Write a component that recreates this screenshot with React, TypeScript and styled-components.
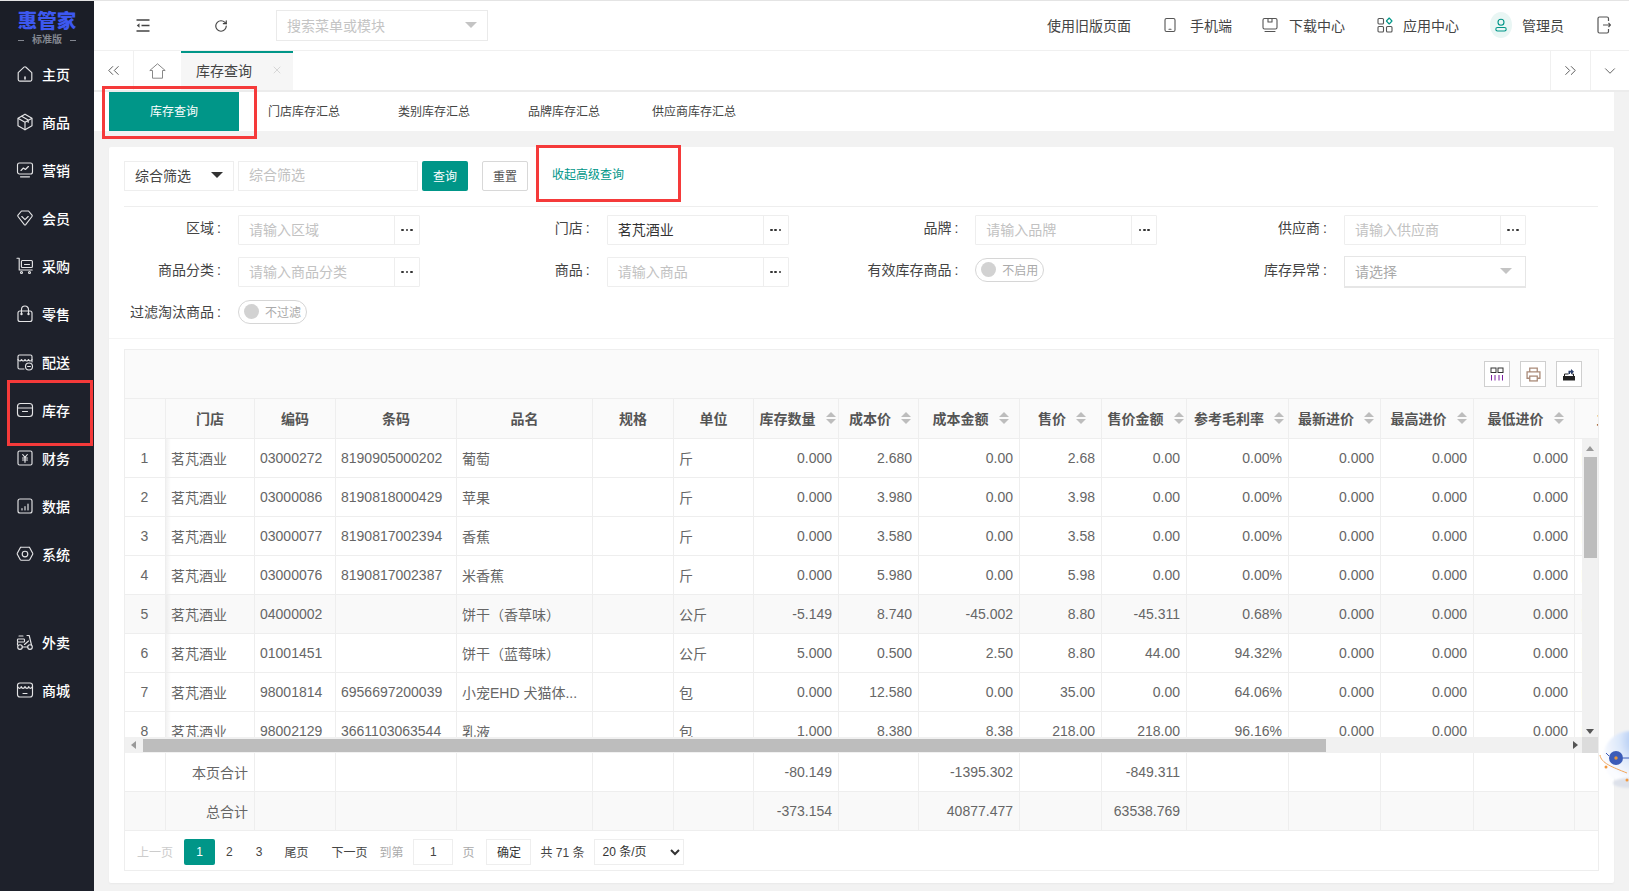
import React from 'react';
import styled, { createGlobalStyle } from 'styled-components';
import { RotateCw, ChevronsLeft, ChevronsRight, ChevronDown, X } from 'lucide-react';

const GREEN = '#009688';
const LINE = '#eeeeee';

const Global = createGlobalStyle`
  html, body { margin: 0; padding: 0; height: 100%; background: #f2f2f2; overflow: hidden; }
  * { box-sizing: border-box; }
  body, select, input, button { font-family: "Liberation Sans", "Noto Sans CJK SC", sans-serif; }
`;

const Page = styled.div`
  display: flex; width: 1629px; height: 891px; position: relative; overflow: hidden;
  border-top: 1px solid #e4e4e4; color: #333;
`;
const Sidebar = styled.aside`
  width: 94px; flex: none; background: #1e212b; display: flex; flex-direction: column;
`;
const LogoBox = styled.div`
  height: 49px; background: #1b1e27; display: flex; flex-direction: column; align-items: center; padding-top: 9px;
`;
const LogoName = styled.div`
  font-size: 19.5px; line-height: 22px; font-weight: 900; color: #3d58f0;
`;
const LogoSub = styled.div`
  font-size: 10px; line-height: 14px; margin-top: 1px; font-weight: 700; color: #82868f;
  display: flex; align-items: center; gap: 8px;
  &::before, &::after { content: ''; width: 6px; height: 1px; background: #82868f; }
`;
const NavList = styled.nav`
  display: flex; flex-direction: column;
`;
const NavItem = styled.a<{ $gap?: boolean }>`
  height: 48px; display: flex; align-items: center; gap: 8px; padding-left: 16px;
  margin-top: ${p => (p.$gap ? '40px' : '0')};
  color: #fff; font-size: 14px; font-weight: 500;
`;
const NavGlyph = styled.svg.attrs({ viewBox: '0 0 18 18' })`
  width: 18px; height: 18px; flex: none; fill: none; stroke: #e4e4e6; stroke-width: 1.15;
  stroke-linecap: round; stroke-linejoin: round;
`;

const Main = styled.main`
  flex: 1; min-width: 0; display: flex; flex-direction: column;
`;
const TopBar = styled.header`
  height: 50px; background: #fff; border-bottom: 1px solid #f0f0f0; display: flex; align-items: center; flex: none; padding-left: 10px;
`;
const TopTool = styled.span`
  display: flex; align-items: center; justify-content: center; width: 78px; flex: none; color: #333;
`;
const MenuSearch = styled.div`
  width: 212px; height: 31px; border: 1px solid #eaeaea; display: flex; align-items: center;
  justify-content: space-between; padding: 0 10px 2px; font-size: 14px; color: #c4c4c4; margin-left: 16px;
`;
const Caret = styled.i<{ $color?: string; $w?: number }>`
  display: block; flex: none; width: 0; height: 0;
  border-left: ${p => p.$w ?? 6}px solid transparent; border-right: ${p => p.$w ?? 6}px solid transparent;
  border-top: ${p => p.$w ?? 6}px solid ${p => p.$color ?? '#c4c4c4'};
`;
const TopLinks = styled.div`
  margin-left: auto; display: flex; align-items: center; padding: 0 18px 2px 0; font-size: 14px; color: #444;
`;
const TopLink = styled.a<{ $ml: number; $gap: number }>`
  display: flex; align-items: center; gap: ${p => p.$gap}px; margin-left: ${p => p.$ml}px;
`;
const TopGlyph = styled.svg.attrs({ viewBox: '0 0 16 16' })`
  width: 16px; height: 16px; flex: none; fill: none; stroke: #555; stroke-width: 1.1; stroke-linejoin: round; stroke-linecap: round;
`;
const LogoutGlyph = styled.svg.attrs({ viewBox: '0 0 14 18' })`
  width: 14px; height: 18px; margin-left: 33px; fill: none; stroke: #555; stroke-width: 1.2;
`;
const Avatar = styled.span`
  width: 22px; height: 26px; border-radius: 50%; background: #e9f6f4; display: flex; align-items: center; justify-content: center;
`;

const TabsBar = styled.div`
  height: 41px; background: #fff; border-bottom: 2px solid #ececec; display: flex; flex: none;
`;
const TabEdge = styled.span<{ $w: number; $side: 'l' | 'r' }>`
  width: ${p => p.$w}px; flex: none; display: flex; align-items: center; justify-content: center; color: #555;
  border-${p => (p.$side === 'l' ? 'right' : 'left')}: 1px solid #f0f0f0;
`;
const HomeTab = styled.span`
  width: 47px; flex: none; display: flex; align-items: center; justify-content: center;
`;
const OpenTab = styled.div`
  width: 112px; flex: none; background: #f6f6f6; border-top: 2px solid ${GREEN}; display: flex; align-items: center;
  padding: 0 0 3px 15px; font-size: 14px; color: #444; gap: 19px;
`;
const TabSpacer = styled.div`flex: 1;`;

const SubTabs = styled.div`
  height: 39px; margin-right: 15px; background: #fff; display: flex; padding-left: 15px; flex: none;
`;
const SubTab = styled.a<{ $on?: boolean }>`
  width: 130px; display: flex; align-items: center; justify-content: center; font-size: 12px; padding-bottom: 3px;
  background: ${p => (p.$on ? GREEN : 'transparent')}; color: ${p => (p.$on ? '#fff' : '#444')};
`;

const Content = styled.div`
  flex: 1; min-height: 0; padding: 16px 15px 9px 15px;
`;
const Card = styled.section`
  height: 736px; background: #fff; border-radius: 2px; box-shadow: 0 1px 2px rgba(0,0,0,.04); display: flex; flex-direction: column;
`;
const QueryArea = styled.div`
  height: 192px; padding: 14px 16px 0 15px; border-bottom: 1px solid #f4f4f4; flex: none;
`;
const QueryRow = styled.div`
  height: 46px; display: flex; border-bottom: 1px solid ${LINE}; align-items: flex-start;
`;
const TypeSelect = styled.div`
  width: 110px; height: 30px; border: 1px solid #eee; display: flex; align-items: center; justify-content: space-between;
  padding: 0 10px 2px; font-size: 14px; color: #444;
`;
const KeywordInput = styled.div`
  width: 180px; height: 30px; border: 1px solid #eee; margin-left: 4px; padding: 0 10px; line-height: 26px; font-size: 14px; color: #c2c2c2;
`;
const QueryBtn = styled.button`
  width: 46px; height: 30px; border: 0; border-radius: 2px; background: ${GREEN}; color: #fff; font-size: 12px; margin-left: 4px; padding: 0 0 2px;
`;
const ResetBtn = styled.button`
  width: 46px; height: 30px; border: 1px solid #d8d8d8; border-radius: 2px; background: #fff; color: #555; font-size: 12px; margin-left: 14px; padding: 0 0 2px;
`;
const FoldLink = styled.a`
  font-size: 12px; color: ${GREEN}; line-height: 28px; margin-left: 24px;
`;
const FormGrid = styled.div`
  display: grid; grid-template-columns: repeat(4, 368.67px); grid-auto-rows: 30px; row-gap: 12px; margin-top: 8px;
`;
const Field = styled.div`
  display: flex; align-items: flex-start;
`;
const FieldLabel = styled.label`
  width: 97px; flex: none; margin-right: 17px; font-size: 14px; line-height: 27px; color: #444; white-space: nowrap;
  display: flex; justify-content: flex-end; gap: 3px;
`;
const PickInput = styled.div`
  width: 182px; height: 30px; border: 1px solid #eee; border-radius: 1px; display: flex; font-size: 14px;
`;
const PickText = styled.span<{ $filled?: boolean }>`
  flex: 1; padding-left: 10px; line-height: 29px; color: ${p => (p.$filled ? '#333' : '#c2c2c2')};
`;
const PickMore = styled.span`
  width: 25px; flex: none; border-left: 1px solid #eee; display: flex; align-items: center; justify-content: center; gap: 1.6px;
  & > i { width: 2.8px; height: 2.8px; border-radius: 50%; background: #333; display: block; }
`;
const PlainSelect = styled.div`
  width: 182px; height: 32px; margin-top: -1px; border: 1px solid #e6e6e6; border-bottom-width: 2px; display: flex; align-items: center; justify-content: space-between;
  padding: 0 13px 2px 10px; font-size: 14px; color: #aaa;
`;
const Toggle = styled.span`
  width: 69px; height: 24px; border: 1px solid #d6d6d6; border-radius: 12px; display: flex; align-items: center; gap: 6px;
  padding: 0 0 1px 5px; font-size: 12px; color: #aaa; margin-top: 1px;
  &::before { content: ''; width: 15px; height: 15px; border-radius: 50%; background: #d2d2d2; }
`;

const TableArea = styled.div`
  flex: 1; padding: 10px 15px 11px 15px; min-height: 0;
`;
const TableFrame = styled.div`
  height: 522px; border: 1px solid ${LINE}; display: flex; flex-direction: column; overflow: hidden;
`;
const ToolStrip = styled.div`
  height: 49px; background: #fafafa; border-bottom: 1px solid ${LINE}; display: flex; align-items: center; justify-content: flex-end; gap: 10px; padding-right: 16px; flex: none;
`;
const ToolBtn = styled.span`
  width: 26px; height: 26px; border: 1px solid #cfcfcf; display: flex; align-items: center; justify-content: center; background: #fff;
`;
const ClipBox = styled.div`
  overflow: hidden; flex: none;
`;
const DataTable = styled.table`
  border-collapse: separate; border-spacing: 0; table-layout: fixed; width: 1550px; font-size: 14px; color: #666;
`;
const HeadCell = styled.th`
  height: 40px; padding: 0 0 2px; font-weight: 700; color: #555; background: #fafafa; text-align: center;
  border-right: 1px solid ${LINE}; border-bottom: 1px solid ${LINE}; white-space: nowrap; overflow: hidden;
`;
const HeadInner = styled.span`
  display: inline-flex; align-items: center;
`;
const SortMark = styled.span`
  display: flex; flex-direction: column; gap: 2px; margin: 0 -3px 0 10px;
  &::before, &::after { content: ''; display: block; width: 0; height: 0; border-left: 5px solid transparent; border-right: 5px solid transparent; }
  &::before { border-bottom: 5px solid #bdbdbd; }
  &::after { border-top: 5px solid #bdbdbd; }
`;
const Cell = styled.td<{ $align?: string; $bg?: string; $fixed?: boolean }>`
  height: 39px; padding: 0 6px 0 5px; text-align: ${p => p.$align ?? 'left'}; white-space: nowrap; overflow: hidden;
  background-color: ${p => p.$bg ?? '#fff'};
  border-right: 1px solid ${LINE}; border-bottom: 1px solid ${LINE};
  ${p => p.$fixed ? 'background-image: linear-gradient(90deg, rgba(0,0,0,.05), rgba(0,0,0,0) 5px);' : ''}
`;
const ScrollGrid = styled.div`
  display: grid; grid-template-columns: 1fr 16px; grid-template-rows: 298px 16px; flex: none;
`;
const BodyClip = styled.div`
  overflow: hidden; min-width: 0;
`;
const VBar = styled.div`
  background: #f1f1f1; display: flex; flex-direction: column; align-items: center; justify-content: space-between;
`;
const VThumb = styled.div`
  width: 13px; height: 101px; background: #bdbdbd; margin-top: 6px;
`;
const VEnd = styled.div`
  height: 11px; display: flex; align-items: center; justify-content: center;
`;
const VBarTop = styled.div`
  display: flex; flex-direction: column; align-items: center; padding-top: 7px;
`;
const HBar = styled.div`
  background: #f1f1f1; display: flex; align-items: center; padding: 0 4px 0 6px;
`;
const HThumb = styled.div`
  width: 1183px; height: 13px; background: #bdbdbd; margin-left: 7px;
`;
const Tri = styled.i<{ $dir: 'up' | 'down' | 'left' | 'right'; $c?: string }>`
  display: block; width: 0; height: 0; border: 4px solid transparent;
  ${p => p.$dir === 'up' && `border-bottom: 5px solid ${p.$c ?? '#999'}; border-top-width: 0;`}
  ${p => p.$dir === 'down' && `border-top: 5px solid ${p.$c ?? '#555'}; border-bottom-width: 0;`}
  ${p => p.$dir === 'left' && `border-right: 5px solid ${p.$c ?? '#999'}; border-left-width: 0;`}
  ${p => p.$dir === 'right' && `border-left: 5px solid ${p.$c ?? '#555'}; border-right-width: 0;`}
`;
const Corner = styled.div`background: #dcdcdc;`;
const Pager = styled.div`
  flex: 1; display: flex; align-items: center; font-size: 12px; color: #444; padding: 2px 0 0 12px;
`;
const PagerText = styled.span<{ $ml?: number; $muted?: boolean; $soft?: boolean }>`
  margin-left: ${p => p.$ml ?? 0}px; color: ${p => (p.$muted ? '#ccc' : p.$soft ? '#aaa' : '#444')}; white-space: nowrap;
`;
const PageOn = styled.span`
  width: 31px; height: 26px; border-radius: 2px; background: ${GREEN}; color: #fff; display: flex; align-items: center; justify-content: center; margin-left: 11px;
`;
const PageBox = styled.span`
  width: 40px; height: 26px; border: 1px solid #eee; display: flex; align-items: center; justify-content: center; margin-left: 10px;
`;
const ConfirmBtn = styled.button`
  width: 45px; height: 26px; border: 1px solid #eee; background: #fff; color: #333; font-size: 12px; margin-left: 12px; padding: 0;
`;
const SizeSelect = styled.select`
  width: 90px; height: 26px; border: 1px solid #eee; background: #fff; color: #333; font-size: 12px; margin-left: 10px; padding-left: 3px; outline: none;
`;

const Annot = styled.div<{ $x: number; $y: number; $w: number; $h: number }>`
  position: absolute; left: ${p => p.$x}px; top: ${p => p.$y - 1}px; width: ${p => p.$w}px; height: ${p => p.$h}px;
  border: 3px solid #f53a3a; pointer-events: none;
`;
const Floater = styled.svg`
  position: absolute; right: 0; top: 724px; width: 30px; height: 66px;
`;

const nav: [string, React.ReactNode, boolean?][] = [
  ['主页', <><path d="M2.2 7.600 8 2.200a1.500 1.500 0 0 1 2 0l5.800 5.400v7a1.500 1.500 0 0 1-1.500 1.500H3.700a1.500 1.500 0 0 1-1.500-1.500z" /><path d="M9 12v2" strokeWidth="1.600" /></>],
  ['商品', <><path d="M9 1.200 16 5.200v7.600l-7 4-7-4V5.200z" /><path d="M2.400 5.500 9 9.200l6.600-3.700M9 9.200v7.400M5.600 3.300l6.600 3.800v2.200" /></>],
  ['营销', <><rect x="1.500" y="2" width="15" height="11" rx="2" /><path d="M5 9.500 7.400 7l2 1.500 3-3M4.500 15.800h9" /></>],
  ['会员', <><path d="M5.500 2h7L16 6.200a1 1 0 0 1 0 1.300l-6.300 8.200a.9.9 0 0 1-1.400 0L2 7.500a1 1 0 0 1 0-1.300z" /><path d="M5.800 7.500 9 10.600l3.200-3.100" /></>],
  ['采购', <><path d="M1 1.200h2.200V13h13" /><rect x="5.400" y="3.500" width="11" height="7" rx="1" /><path d="M8.500 7.500h5" /><circle cx="5.500" cy="15.500" r="1" /><circle cx="13.500" cy="15.500" r="1" /></>],
  ['零售', <><rect x="2" y="6" width="14" height="10.500" rx="2" /><path d="M5.500 8.500V4.500a3.500 3.500 0 0 1 7 0v4" /><circle cx="5.500" cy="9" r=".6" /><circle cx="12.500" cy="9" r=".6" /></>],
  ['配送', <><path d="M8 16H3.500A1.500 1.500 0 0 1 2 14.500v-11A1.500 1.500 0 0 1 3.500 2h11A1.500 1.500 0 0 1 16 3.500V9" /><path d="M2 6.500c1.200 2 2.600 2 3.500 0 .9 2 2.600 2 3.500 0 .9 2 2.600 2 3.500 0 .9 2 2.300 2 3.500 0" /><circle cx="13" cy="13.500" r="3.500" /><path d="M11.600 13.500h2.800" /></>],
  ['库存', <><rect x="1.500" y="2.500" width="15" height="13" rx="3" /><path d="M1.500 7h15M6.500 10.500h5" /></>],
  ['财务', <><rect x="2" y="2" width="14" height="14" rx="1.500" /><path d="M6.700 5.500 9 8.300l2.300-2.800M6.500 9h5M6.500 11h5M9 8.300v5" /></>],
  ['数据', <><rect x="2" y="2" width="14" height="14" rx="2" /><path d="M6 13v-1.500M9 13V9.500M12 13V7" /></>],
  ['系统', <><path d="M5.200 2.200h7.600a1 1 0 0 1 .9.5l3 5.600a1 1 0 0 1 0 1l-3 5.400a1 1 0 0 1-.9.5H5.200a1 1 0 0 1-.9-.5l-3-5.400a1 1 0 0 1 0-1l3-5.600a1 1 0 0 1 .9-.5z" /><circle cx="9" cy="9" r="2.800" /></>],
  ['外卖', <><circle cx="4" cy="14" r="2.300" /><circle cx="14" cy="14" r="2.300" /><rect x="1.500" y="6" width="7" height="3" rx=".8" /><path d="M1.500 12V9.500M6.300 14h5.400M11 2.500h2.200L15.500 12M8.500 11.500l4-3.500M3 3h4" /></>, true],
  ['商城', <><rect x="1.500" y="2" width="15" height="14" rx="2.500" /><path d="M1.500 5.500c1 2.400 3.200 2.400 3.700 0 .6 2.400 3 2.400 3.800 0 .8 2.400 3.200 2.400 3.800 0 .5 2.400 2.700 2.400 3.700 0M7 12.500h4" /></>],
];

const heads: [string, number, boolean][] = [
  ['', 41, false], ['门店', 89, false], ['编码', 81, false], ['条码', 121, false], ['品名', 136, false], ['规格', 81, false], ['单位', 80, false],
  ['库存数量', 85, true], ['成本价', 80, true], ['成本金额', 101, true], ['售价', 82, true], ['售价金额', 85, true], ['参考毛利率', 102, true],
  ['最新进价', 92, true], ['最高进价', 93, true], ['最低进价', 101, true], ['主供应商', 100, false],
];

const S = '茗芃酒业';
const rows: string[][] = [
  ['03000272', '8190905000202', '葡萄', '斤', '0.000', '2.680', '0.00', '2.68', '0.00', '0.00%'],
  ['03000086', '8190818000429', '苹果', '斤', '0.000', '3.980', '0.00', '3.98', '0.00', '0.00%'],
  ['03000077', '8190817002394', '香蕉', '斤', '0.000', '3.580', '0.00', '3.58', '0.00', '0.00%'],
  ['03000076', '8190817002387', '米香蕉', '斤', '0.000', '5.980', '0.00', '5.98', '0.00', '0.00%'],
  ['04000002', '', '饼干（香草味）', '公斤', '-5.149', '8.740', '-45.002', '8.80', '-45.311', '0.68%'],
  ['01001451', '', '饼干（蓝莓味）', '公斤', '5.000', '0.500', '2.50', '8.80', '44.00', '94.32%'],
  ['98001814', '6956697200039', '小宠EHD 犬猫体...', '包', '0.000', '12.580', '0.00', '35.00', '0.00', '64.06%'],
  ['98002129', '3661103063544', '乳液', '包', '1.000', '8.380', '8.38', '218.00', '218.00', '96.16%'],
];

const Cols = () => <colgroup>{heads.map((h, i) => <col key={i} width={h[1]} />)}</colgroup>;

const Total = ({ label, bg, vals }: { label: string; bg?: string; vals: Record<number, string> }) => (
  <tr>
    {heads.map((_, i) => (
      <Cell key={i} $bg={bg} $align="right">{i === 1 ? label : vals[i] ?? ''}</Cell>
    ))}
  </tr>
);

const Pick = ({ label, ph, value }: { label: string; ph?: string; value?: string }) => (
  <Field>
    <FieldLabel>{label}<span>:</span></FieldLabel>
    <PickInput>
      <PickText $filled={!!value}>{value ?? ph}</PickText>
      <PickMore><i /><i /><i /></PickMore>
    </PickInput>
  </Field>
);

export default function App() {
  return (
    <>
      <Global />
      <Page>
        <Sidebar>
          <LogoBox>
            <LogoName>惠管家</LogoName>
            <LogoSub>标准版</LogoSub>
          </LogoBox>
          <NavList>
            {nav.map(([t, g, gap]) => (
              <NavItem key={t} $gap={gap}><NavGlyph>{g}</NavGlyph>{t}</NavItem>
            ))}
          </NavList>
        </Sidebar>
        <Main>
          <TopBar>
            <TopTool>
              <svg width="14" height="13" viewBox="0 0 14 13" fill="none" stroke="#444" strokeWidth="1.300">
                <path d="M0.500 1h13M5.500 6.500h8M0.500 12h13" />
                <path d="M3.500 4.200 0.800 6.500l2.700 2.300z" fill="#444" stroke="none" />
              </svg>
            </TopTool>
            <TopTool><RotateCw size={14} strokeWidth={2} color="#444" /></TopTool>
            <MenuSearch>搜索菜单或模块<Caret /></MenuSearch>
            <TopLinks>
              <span>使用旧版页面</span>
              <TopLink $ml={31} $gap={12}>
                <TopGlyph><rect x="3" y="1.500" width="10" height="13" rx="1.500" /><path d="M7 12.200h2" /></TopGlyph>手机端
              </TopLink>
              <TopLink $ml={30} $gap={11}>
                <TopGlyph><rect x="1" y="1.500" width="14" height="10.500" rx="1.500" /><path d="M3 14.500h10M6 1.500v3.500h4V1.500" /></TopGlyph>下载中心
              </TopLink>
              <TopLink $ml={32} $gap={10}>
                <TopGlyph>
                  <rect x="1" y="1.500" width="5.500" height="5.500" rx="1" /><rect x="1" y="9.500" width="5.500" height="5.500" rx="1" /><rect x="9.500" y="9.500" width="5.500" height="5.500" rx="1" />
                  <path d="M12.200 1 15 4l-2.800 3-2.800-3z" stroke={GREEN} />
                </TopGlyph>应用中心
              </TopLink>
              <TopLink $ml={31} $gap={10}>
                <Avatar>
                  <svg width="14" height="14" viewBox="0 0 14 14" fill="none" stroke={GREEN} strokeWidth="1.100">
                    <circle cx="7" cy="4.200" r="3" /><rect x="1.800" y="9.500" width="10.400" height="3.500" rx="1.700" />
                  </svg>
                </Avatar>管理员
              </TopLink>
              <LogoutGlyph>
                <path d="M11.500 5V2.500a1.500 1.500 0 0 0-1.500-1.500H2.500A1.500 1.500 0 0 0 1 2.500v13A1.500 1.500 0 0 0 2.500 17H10a1.500 1.500 0 0 0 1.500-1.500V13M6 9h7.500M11.500 7l2 2-2 2" />
              </LogoutGlyph>
            </TopLinks>
          </TopBar>
          <TabsBar>
            <TabEdge $w={40} $side="l"><ChevronsLeft size={19} strokeWidth={1.200} /></TabEdge>
            <HomeTab>
              <svg width="17" height="16" viewBox="0 0 17 16" fill="none" stroke="#888" strokeWidth="1">
                <path d="M0.800 7.500 8.500 0.800l7.700 6.700H13.500v7.700H3.500V7.500z" strokeLinejoin="round" />
              </svg>
            </HomeTab>
            <OpenTab>库存查询<X size={12} strokeWidth={1.400} color="#c8c8c8" /></OpenTab>
            <TabSpacer />
            <TabEdge $w={40} $side="r"><ChevronsRight size={19} strokeWidth={1.200} /></TabEdge>
            <TabEdge $w={39} $side="r"><ChevronDown size={18} strokeWidth={1.200} /></TabEdge>
          </TabsBar>
          <SubTabs>
            <SubTab $on>库存查询</SubTab>
            <SubTab>门店库存汇总</SubTab>
            <SubTab>类别库存汇总</SubTab>
            <SubTab>品牌库存汇总</SubTab>
            <SubTab>供应商库存汇总</SubTab>
          </SubTabs>
          <Content>
            <Card>
              <QueryArea>
                <QueryRow>
                  <TypeSelect>综合筛选<Caret $color="#333" $w={6} /></TypeSelect>
                  <KeywordInput>综合筛选</KeywordInput>
                  <QueryBtn>查询</QueryBtn>
                  <ResetBtn>重置</ResetBtn>
                  <FoldLink>收起高级查询</FoldLink>
                </QueryRow>
                <FormGrid>
                  <Pick label="区域" ph="请输入区域" />
                  <Pick label="门店" value={S} />
                  <Pick label="品牌" ph="请输入品牌" />
                  <Pick label="供应商" ph="请输入供应商" />
                  <Pick label="商品分类" ph="请输入商品分类" />
                  <Pick label="商品" ph="请输入商品" />
                  <Field><FieldLabel>有效库存商品<span>:</span></FieldLabel><Toggle>不启用</Toggle></Field>
                  <Field><FieldLabel>库存异常<span>:</span></FieldLabel><PlainSelect>请选择<Caret $w={6} /></PlainSelect></Field>
                  <Field><FieldLabel>过滤淘汰商品<span>:</span></FieldLabel><Toggle>不过滤</Toggle></Field>
                </FormGrid>
              </QueryArea>
              <TableArea>
                <TableFrame>
                  <ToolStrip>
                    <ToolBtn>
                      <svg width="14" height="14" viewBox="0 0 14 14" fill="none" strokeWidth="1">
                        <rect x="1" y="1" width="5" height="4.500" stroke="#333" /><rect x="8" y="1" width="5" height="4.500" stroke="#333" />
                        <path d="M1.500 8v5.500M5 8v5.500M9 8v5.500M12.500 8v5.500" stroke="#7b1fa2" />
                      </svg>
                    </ToolBtn>
                    <ToolBtn>
                      <svg width="15" height="15" viewBox="0 0 14 14" fill="none" stroke="#a98a78" strokeWidth="1.200">
                        <path d="M3.500 4.500V1h7v3.500M3.500 10.500H1V4.500h12v6h-2.500" /><rect x="3.500" y="8.500" width="7" height="4.500" />
                      </svg>
                    </ToolBtn>
                    <ToolBtn>
                      <svg width="14" height="14" viewBox="0 0 14 14" fill="#222">
                        <path d="M1 9h12v4.500H1z" />
                        <path d="M2.500 9V7h4M11.500 9V7h-1.500" fill="none" stroke="#222" strokeWidth="1" />
                        <path d="M6.500 7V3.800H9V2l3 2.700-3 2.700V5.600H8V7z" fill="#2b3f6b" />
                      </svg>
                    </ToolBtn>
                  </ToolStrip>
                  <ClipBox>
                    <DataTable>
                      <Cols />
                      <thead>
                        <tr>
                          {heads.map((h, i) => (
                            <HeadCell key={i}>
                              <HeadInner>{h[0]}{h[2] && <SortMark />}</HeadInner>
                            </HeadCell>
                          ))}
                        </tr>
                      </thead>
                    </DataTable>
                  </ClipBox>
                  <ScrollGrid>
                    <BodyClip>
                      <DataTable>
                        <Cols />
                        <tbody>
                          {rows.map((r, i) => {
                            const bg = i === 4 ? '#f9f9f9' : undefined;
                            return (
                              <tr key={i}>
                                <Cell $align="center" $bg={bg}>{i + 1}</Cell>
                                <Cell $bg={bg} $fixed>{S}</Cell>
                                <Cell $bg={bg}>{r[0]}</Cell>
                                <Cell $bg={bg}>{r[1]}</Cell>
                                <Cell $bg={bg}>{r[2]}</Cell>
                                <Cell $bg={bg} />
                                <Cell $bg={bg}>{r[3]}</Cell>
                                {r.slice(4).map((v, j) => <Cell key={j} $align="right" $bg={bg}>{v}</Cell>)}
                                <Cell $align="right" $bg={bg}>0.000</Cell>
                                <Cell $align="right" $bg={bg}>0.000</Cell>
                                <Cell $align="right" $bg={bg}>0.000</Cell>
                                <Cell $bg={bg}>日用品</Cell>
                              </tr>
                            );
                          })}
                        </tbody>
                      </DataTable>
                    </BodyClip>
                    <VBar>
                      <VBarTop><Tri $dir="up" /><VThumb /></VBarTop>
                      <VEnd><Tri $dir="down" /></VEnd>
                    </VBar>
                    <HBar><Tri $dir="left" /><HThumb /><TabSpacer /><Tri $dir="right" /></HBar>
                    <Corner />
                  </ScrollGrid>
                  <ClipBox>
                    <DataTable>
                      <Cols />
                      <tbody>
                        <Total label="本页合计" vals={{ 7: '-80.149', 9: '-1395.302', 11: '-849.311' }} />
                        <Total label="总合计" bg="#f9f9f9" vals={{ 7: '-373.154', 9: '40877.477', 11: '63538.769' }} />
                      </tbody>
                    </DataTable>
                  </ClipBox>
                  <Pager>
                    <PagerText $muted>上一页</PagerText>
                    <PageOn>1</PageOn>
                    <PagerText $ml={11}>2</PagerText>
                    <PagerText $ml={23}>3</PagerText>
                    <PagerText $ml={22}>尾页</PagerText>
                    <PagerText $ml={23}>下一页</PagerText>
                    <PagerText $ml={12} $soft>到第</PagerText>
                    <PageBox>1</PageBox>
                    <PagerText $ml={9} $soft>页</PagerText>
                    <ConfirmBtn>确定</ConfirmBtn>
                    <PagerText $ml={9}>共 71 条</PagerText>
                    <SizeSelect defaultValue="20"><option value="20">20 条/页</option></SizeSelect>
                  </Pager>
                </TableFrame>
              </TableArea>
            </Card>
          </Content>
        </Main>
        <Annot $x={7} $y={380} $w={86} $h={66} />
        <Annot $x={102} $y={86} $w={155} $h={53} />
        <Annot $x={536} $y={145} $w={145} $h={57} />
        <Floater viewBox="0 0 30 66">
          <defs>
            <radialGradient id="ball" cx="75%" cy="18%" r="80%">
              <stop offset="0%" stopColor="#8fb4ee" />
              <stop offset="55%" stopColor="#dbe7fa" />
              <stop offset="100%" stopColor="#fbfcff" />
            </radialGradient>
            <filter id="soft" x="-20%" y="-20%" width="140%" height="140%"><feGaussianBlur stdDeviation="1.200" /></filter>
          </defs>
          <circle cx="31" cy="33" r="27" fill="url(#ball)" filter="url(#soft)" />
          <ellipse cx="30" cy="58" rx="16" ry="5" fill="#dde1ea" filter="url(#soft)" />
          <path d="M1 30c1 8 12 12 27 18" fill="none" stroke="#f2a65a" strokeWidth="1" />
          <circle cx="7" cy="42" r="1.500" fill="#f2993f" />
          <circle cx="28" cy="55" r="1.500" fill="#f2993f" />
          <circle cx="17" cy="33" r="7" fill="#3c5cb8" />
          <circle cx="17" cy="33" r="1.700" fill="#e8963c" />
          <path d="M24 33h6M7 28l3 3" stroke="#3c5cb8" strokeWidth="1" />
        </Floater>
      </Page>
    </>
  );
}
